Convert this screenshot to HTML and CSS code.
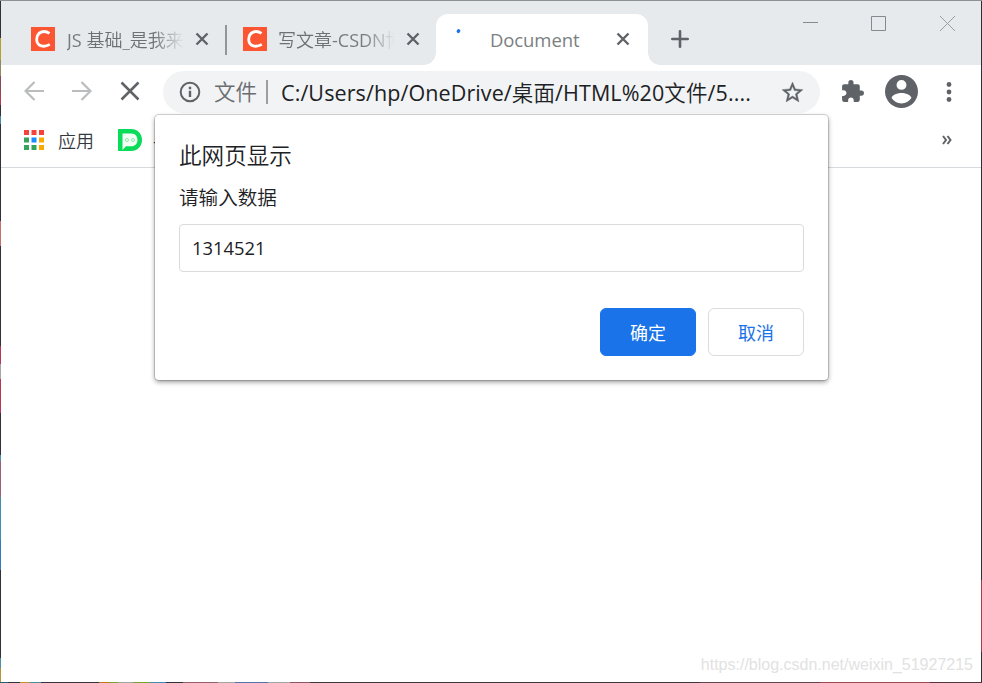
FILE: index.html
```html
<!DOCTYPE html>
<html lang="zh-CN">
<head>
<meta charset="utf-8">
<title>Document</title>
<link rel="stylesheet" href="styles.css">
</head>
<body>
<div class="window">
  <header class="tabstrip">
    <div class="tab tab-first">
      <svg class="favicon" viewBox="0 0 24 24"><path fill="#fc5531" d="M0 0h24v24H0z"/><path d="M18.5 6.4C13 2.5 6 5 5.7 12.3 5.7 20 13.5 20.6 18.8 17.4" fill="none" stroke="#fff" stroke-width="2.8"/></svg>
      <span class="tab-title fade"><span class="latin">JS</span> 基础_是我来</span>
      <svg class="close" viewBox="0 0 14 14"><path d="M1.5 1.5l11 11m0-11l-11 11"/></svg>
    </div>
    <i class="tab-separator"></i>
    <div class="tab tab-second">
      <svg class="favicon" viewBox="0 0 24 24"><path fill="#fc5531" d="M0 0h24v24H0z"/><path d="M18.5 6.4C13 2.5 6 5 5.7 12.3 5.7 20 13.5 20.6 18.8 17.4" fill="none" stroke="#fff" stroke-width="2.8"/></svg>
      <span class="tab-title fade">写文章<span class="latin">-CSDN</span>博</span>
      <svg class="close" viewBox="0 0 14 14"><path d="M1.5 1.5l11 11m0-11l-11 11"/></svg>
    </div>
    <div class="tab tab-active">
      <svg class="spinner" viewBox="0 0 24 24"><path d="M10.3 7.4l.4-.6" stroke="#1a73e8" stroke-width="3.4" stroke-linecap="round"/></svg>
      <span class="tab-title document-title">Document</span>
      <svg class="close" viewBox="0 0 14 14"><path d="M1.5 1.5l11 11m0-11l-11 11"/></svg>
    </div>
    <svg class="new-tab" viewBox="0 0 18 18"><path d="M9 1.3v15.4M1.3 9h15.4" stroke="#5f6368" stroke-width="2.6" stroke-linecap="round"/></svg>
    <svg class="window-controls" viewBox="0 0 154 18" fill="none" stroke="#858a8e"><path d="M0 7.5h15M68.500 1.500h14v14h-14z"/><path d="M137 1l15 15m0-15l-15 15" stroke="#999da0"/></svg>
  </header>
  <nav class="toolbar">
    <svg class="nav-icon" viewBox="0 0 20 20"><path d="M20 10H2M10.500 1L1.500 10l9 9" fill="none" stroke="#babcbe" stroke-width="2.200"/></svg>
    <svg class="nav-icon" viewBox="0 0 20 20"><path d="M0 10h18M9.500 1l9 9-9 9" fill="none" stroke="#babcbe" stroke-width="2.200"/></svg>
    <svg class="nav-icon" viewBox="0 0 20 20"><path d="M1.500 1.500l17 17m0-17l-17 17" stroke="#5f6368" stroke-width="2.500"/></svg>
    <div class="omnibox">
      <svg class="info" viewBox="0 0 22 22"><circle cx="11" cy="11" r="9.300" fill="none" stroke="#5f6368" stroke-width="2"/><path fill="#5f6368" d="M9.800 5.800h2.400v2.400H9.800zM9.800 9.800h2.400V16H9.800z"/></svg>
      <span class="scheme">文件</span>
      <i class="omnibox-divider"></i>
      <span class="url">C:/Users/hp/OneDrive/<span class="cjk">桌面</span>/HTML%20<span class="cjk">文件</span>/5....</span>
      <svg class="star" viewBox="0 0 24 24"><path fill="#5f6368" stroke="#5f6368" stroke-width=".4" d="M22 9.240l-7.190-.62L12 2 9.190 8.630 2 9.240l5.460 4.730L5.820 21 12 17.270 18.180 21l-1.630-7.030L22 9.240zM12 15.400l-3.760 2.270 1-4.280-3.320-2.880 4.380-.38L12 6.100l1.710 4.040 4.380.38-3.320 2.880 1 4.280L12 15.400z"/></svg>
    </div>
    <svg class="extension" viewBox="0 0 24 24"><path fill="#5f6368" d="M20.500 11H19V7c0-1.100-.9-2-2-2h-4V3.500a2.500 2.500 0 0 0-5 0V5H4c-1.100 0-1.990.9-1.990 2v3.800H3.500c1.490 0 2.700 1.210 2.700 2.700s-1.210 2.700-2.700 2.700H2V20c0 1.100.9 2 2 2h3.800v-1.500c0-1.490 1.210-2.700 2.700-2.700s2.700 1.210 2.700 2.700V22H17c1.100 0 2-.9 2-2v-4h1.500a2.500 2.500 0 0 0 0-5z"/></svg>
    <svg class="avatar" viewBox="2 2 20 20"><path fill="#5f6368" d="M12 2a10 10 0 1 0 0 20 10 10 0 0 0 0-20zm0 3a3 3 0 1 1 0 6 3 3 0 0 1 0-6zm0 14.200a7.200 7.200 0 0 1-6-3.220c.03-1.990 4-3.080 6-3.080s5.970 1.090 6 3.080a7.200 7.200 0 0 1-6 3.220z"/></svg>
    <svg class="menu" viewBox="0 0 6 20" fill="#5f6368"><circle cx="3" cy="2.500" r="2.400"/><circle cx="3" cy="10" r="2.400"/><circle cx="3" cy="17.500" r="2.400"/></svg>
  </nav>
  <div class="bookmarks">
    <svg class="apps" viewBox="0 0 20 20"><path fill="#f4433c" d="M0 0h5v5H0zM7.500 0h5v5h-5zM15 0h5v5h-5z"/><path fill="#34a35b" d="M0 7.500h5v5H0zM0 15h5v5H0zM7.500 15h5v5h-5z"/><path fill="#1a8cff" d="M7.500 7.500h5v5h-5z"/><path fill="#f9ab00" d="M15 7.500h5v5h-5zM15 15h5v5h-5z"/></svg>
    <span class="apps-label">应用</span>
    <svg class="d-logo" viewBox="0 0 24 22"><path fill="#08dc58" d="M0 0h13c6.500 0 11 4.800 11 11s-4.500 11-11 11H0z"/><path fill="#f2fff5" d="M4.500 4.500h9c3.500 0 6 2.800 6 6.500s-2.500 6.300-6 6.300H8L4.500 21z"/><g fill="none" stroke="#8ce9aa" stroke-width="1"><circle cx="9" cy="11" r="1.500"/><circle cx="15" cy="11" r="1.500"/></g></svg>
    <span class="clipped-label">手</span>
    <svg class="more" viewBox="0 0 10 10"><path d="M1 1l3 4-3 4M5.500 1l3 4-3 4" fill="none" stroke="#5f6368" stroke-width="2"/></svg>
  </div>
  <main class="page"><span class="watermark">https://blog.csdn.net/weixin_51927215</span></main>
  <section class="dialog">
    <h1>此网页显示</h1>
    <p>请输入数据</p>
    <div class="field">1314521</div>
    <div class="actions"><button class="primary">确定</button><button>取消</button></div>
  </section>
</div>
</body>
</html>
```
FILE: styles.css
```css
* { box-sizing: border-box; }
html, body { height: 100%; margin: 0; }
body {
  overflow: hidden;
  padding: 1px;
  font-family: "Open Sans", "Noto Sans CJK SC", sans-serif;
  background:
    linear-gradient(#8f9194, #8f9194) top / 100% 1px no-repeat,
    linear-gradient(90deg, #25616e 0 8px, #343039 8px 20px, #b99332 20px 30px, #4a8c99 30px 41px, #39323d 41px 99px, #b8781c 99px 110px, #75a431 110px 118px, #a3a5a3 118px 133px, #75a431 133px 150px, #418bb4 150px 166px, #2e3135 166px 183px, #966069 183px 218px, #a3a5a3 218px 235px, #5374ab 235px 268px, #a3a5a3 268px 290px, #8d5664 290px 310px, #403841 310px 700px, #644452 700px 820px, #a04852 820px 930px, #51343c 930px) bottom / 100% 1px no-repeat,
    linear-gradient(#343039 0 38px, #b4a22c 38px 60px, #938960 60px 76px, #864958 76px 93px, #b33a55 93px 105px, #343039 105px 116px, #4685a8 116px 124px, #343039 124px 221px, #c66f6c 221px 246px, #343039 246px 346px, #b63755 346px 364px, #a8a5a7 364px 379px, #b63755 379px 413px, #343039 413px 455px, #4e91b3 455px 461px, #9c6073 461px 497px, #4290b1 497px 540px, #3478bd 540px 570px, #343039 570px 658px, #4a91a2 658px 668px, #b8913a 668px) left / 1px 100% no-repeat,
    linear-gradient(#302e36 0 580px, #9d3f47 580px 652px, #302e36 652px) right / 1px 100% no-repeat;
}
svg { display: block; flex: none; }
.window { position: relative; height: 681px; background: #fff; display: flex; flex-direction: column; }
.tabstrip { height: 64px; background: #e6eaed; display: flex; align-items: flex-end; flex: none; }
.tab { height: 51px; display: flex; align-items: center; flex: none; padding-bottom: 1px; }
.tab-first { width: 224px; padding-left: 30px; }
.tab-second { width: 209px; padding-left: 16px; }
.favicon { width: 24px; height: 24px; margin-right: 12px; }
.tab-second .favicon { margin-right: 11px; }
.tab-title { width: 117px; height: 28px; margin-top: 2px; font-size: 18px; line-height: 28px; font-weight: 350; color: #6d7174; white-space: nowrap; overflow: hidden; }
.latin { font-weight: 400; color: #777b7e; }
.cjk { font-weight: 350; }
.fade { mask-image: linear-gradient(90deg, #000 74%, transparent); }
.close { width: 14px; height: 14px; margin-left: 11px; fill: none; stroke: #5f6368; stroke-width: 2.4; }
.tab-separator { width: 2px; height: 30px; background: #92969a; margin-bottom: 10px; }
.tab-active { width: 211.500px; background: #fff; border-radius: 12px 12px 0 0; position: relative; padding-left: 12px; }
.tab-active::before, .tab-active::after { content: ""; position: absolute; bottom: 0; width: 12px; height: 12px; }
.tab-active::before { left: -12px; background: radial-gradient(circle at 0 0, transparent 11.5px, #fff 12px); }
.tab-active::after { right: -12px; background: radial-gradient(circle at 100% 0, transparent 11.5px, #fff 12px); }
.spinner { width: 24px; height: 24px; margin: -6px 18px 0 0; }
.tab-active .document-title { width: 115px; font-size: 18.5px; font-weight: 400; letter-spacing: -.1px; color: #7b7f82; }
.new-tab { width: 18px; height: 18px; margin: 0 0 17px 23.500px; }
.window-controls { width: 154px; height: 18px; margin: 0 24px 32px auto; }
.toolbar { height: 53px; flex: none; display: flex; align-items: center; padding-left: 23px; }
.nav-icon { width: 20px; height: 20px; margin: -1px 28px 0 0; }
.nav-icon:nth-child(3) { margin-right: 23px; }
.omnibox { width: 657px; height: 42px; margin-top: 1px; border-radius: 21px; background: #f1f3f4; display: flex; align-items: center; padding: 0 15px 0 16px; flex: none; font-size: 21.5px; }
.info { width: 22px; height: 22px; margin-right: 13px; }
.scheme { width: 43px; margin-top: -3px; color: #696d70; font-weight: 350; }
.omnibox-divider { width: 2px; height: 24px; background: #9b9ea1; margin: 0 13px 0 9px; }
.url { flex: 1; margin-top: -2px; white-space: nowrap; color: #202124; letter-spacing: .1px; }
.star { width: 25px; height: 25px; }
.extension { width: 25px; height: 25px; margin-left: 20px; }
.avatar { width: 33px; height: 33px; margin-left: 19.500px; }
.menu { width: 6px; height: 20px; margin-left: 28.500px; }
.bookmarks { height: 50px; flex: none; border-bottom: 1px solid #d7dadd; display: flex; align-items: center; padding: 0 29px 6px 23px; font-size: 18px; font-weight: 350; color: #35393d; }
.apps { width: 20px; height: 20px; }
.apps-label { margin: 1px 24px 0 14px; }
.d-logo { width: 24px; height: 22px; }
.clipped-label { margin-left: 11px; }
.more { width: 10px; height: 10px; margin-left: auto; }
.page { flex: 1; display: flex; align-items: flex-end; justify-content: flex-end; padding: 0 8px 7px; }
.watermark { font: 16px/20px "Liberation Sans", sans-serif; color: #e2e2e2; }
.dialog { position: absolute; left: 154px; top: 113.500px; width: 673px; height: 265.500px; padding: 23.500px 24px 24px; background: #fff; border-radius: 4px; box-shadow: 0 0 0 1px rgba(0,0,0,.14), 0 2px 5px rgba(0,0,0,.42); color: #202124; }
.dialog h1 { margin: 0; font-size: 22.6px; line-height: 36px; font-weight: 350; }
.dialog p { margin: 8px 0 10px; font-size: 19.6px; line-height: 32px; font-weight: 350; }
.field { height: 48px; border: 1px solid #d9dbdd; border-radius: 4px; padding: 0 12px; font-size: 18.4px; line-height: 46px; }
.actions { display: flex; justify-content: flex-end; gap: 12px; margin-top: 36px; }
.actions button { width: 96px; height: 48px; border: 1px solid #dadce0; border-radius: 6px; background: #fff; color: #1a73e8; font: 400 18px "Noto Sans CJK SC", sans-serif; padding: 0; }
.actions .primary { border-color: #1a73e8; background: #1a73e8; color: #fff; }
```
